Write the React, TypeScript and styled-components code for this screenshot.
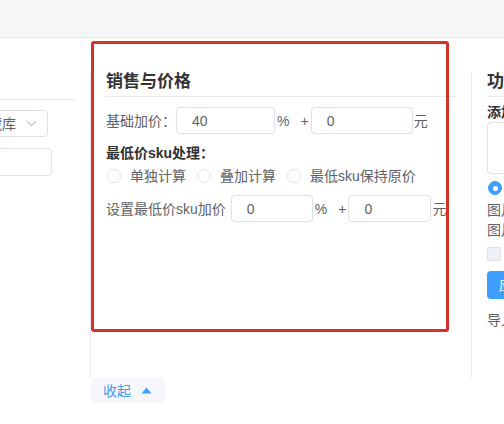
import React from "react";
import styled, { createGlobalStyle } from "styled-components";

const Global = createGlobalStyle`
  html, body { margin: 0; padding: 0; background: #fff; }
  body {
    width: 504px; height: 424px; overflow: hidden;
    font-family: "Liberation Sans", "Noto Sans CJK SC", sans-serif;
    font-size: 14px; color: #606266;
  }
  * { box-sizing: border-box; }
`;

const Page = styled.div`
  position: relative;
  width: 504px;
  height: 424px;
  overflow: hidden;
`;

const TopBar = styled.div`
  height: 38px;
  background: #f5f6f8;
  border-bottom: 1px solid #e6e8eb;
`;

const Main = styled.div`
  display: flex;
  align-items: stretch;
  margin-top: 35px;
  height: 305px;
`;

const LeftCol = styled.div`
  width: 75px;
  flex: none;
  overflow: hidden;
  display: flex;
  flex-direction: column;
  align-items: flex-end;
`;

const LeftHead = styled.div`
  align-self: stretch;
  height: 27px;
  border-bottom: 1px solid #e8eaed;
`;

const SelectBox = styled.div`
  flex: none;
  width: 160px;
  height: 27px;
  margin-top: 10px;
  margin-right: 27px;
  border: 1px solid #dcdfe6;
  border-radius: 4px;
  display: flex;
  align-items: center;
  justify-content: flex-end;
  padding-right: 10px;
  gap: 10px;
  white-space: nowrap;
  color: #606266;
  line-height: 20px;
`;

const LeftInput = styled.div`
  flex: none;
  width: 160px;
  height: 28px;
  margin-top: 11px;
  margin-right: 23px;
  border: 1px solid #dcdfe6;
  border-radius: 4px;
`;

const Column = styled.div<{ $gap?: number }>`
  flex: none;
  margin-left: ${(p) => p.$gap ?? 0}px;
  border-left: 1px solid #e8eaed;
  padding-left: 15px;
  display: flex;
  flex-direction: column;
`;

const MidCol = styled(Column)`
  width: 381px;
  padding-right: 14px;
`;

const RightCol = styled(Column)`
  width: 240px;
  white-space: nowrap;
`;

const SectionTitle = styled.div`
  font-family: "Noto Sans CJK SC", sans-serif;
  font-size: 17px;
  font-weight: 700;
  line-height: 14px;
  color: #333;
  padding-bottom: 9px;
  border-bottom: 1px solid #e8eaed;
  white-space: nowrap;
`;

const Row = styled.div<{ $mt: number }>`
  display: flex;
  align-items: center;
  margin-top: ${(p) => p.$mt}px;
  height: 27px;
  white-space: nowrap;
`;

const Label = styled.span`
  color: #606266;
  line-height: 20px;
`;

const Field = styled.div<{ $w: number; $ml?: number }>`
  width: ${(p) => p.$w}px;
  height: 27px;
  margin-left: ${(p) => p.$ml ?? 0}px;
  border: 1px solid #dcdfe6;
  border-radius: 4px;
  padding-left: 15px;
  display: flex;
  align-items: center;
  color: #606266;
  font-family: "Liberation Sans", sans-serif;
`;

const Unit = styled.span<{ $ml: number; $mr: number }>`
  margin-left: ${(p) => p.$ml}px;
  margin-right: ${(p) => p.$mr}px;
  color: #606266;
  line-height: 20px;
`;

const SubTitle = styled.div<{ $mt: number }>`
  margin-top: ${(p) => p.$mt}px;
  font-weight: 700;
  color: #303133;
  line-height: 20px;
  white-space: nowrap;
`;

const RadioRow = styled.div`
  display: flex;
  align-items: center;
  margin-top: 3px;
  height: 20px;
  white-space: nowrap;
`;

const RadioItem = styled.label`
  display: flex;
  align-items: center;
  margin-right: 10px;
  color: #606266;
  line-height: 20px;
`;

const RadioDot = styled.span<{ $on?: boolean }>`
  width: 14px;
  height: 14px;
  border-radius: 50%;
  border: 1px solid ${(p) => (p.$on ? "#409eff" : "#e0e3e8")};
  background: ${(p) => (p.$on ? "#409eff" : "#fff")};
  margin-left: 1px;
  margin-right: 9px;
  flex: none;
  display: flex;
  align-items: center;
  justify-content: center;
  &::after {
    content: "";
    width: 5px;
    height: 5px;
    border-radius: 50%;
    background: #fff;
    display: ${(p) => (p.$on ? "block" : "none")};
  }
`;

const Line = styled.div<{ $mt?: number }>`
  margin-top: ${(p) => p.$mt ?? 0}px;
  line-height: 20px;
  height: 20px;
  color: #606266;
`;

const BoldLabel = styled(Line)`
  font-weight: 700;
  color: #303133;
`;

const TextArea = styled.div`
  height: 52px;
  width: 200px;
  border: 1px solid #dcdfe6;
  border-radius: 4px;
`;

const CheckBox = styled.span`
  display: block;
  width: 14px;
  height: 14px;
  border: 1px solid #dcdfe6;
  border-radius: 2px;
  background: #edf0f5;
`;

const CheckRow = styled.div`
  margin-top: 4px;
  height: 20px;
  display: flex;
  align-items: center;
  gap: 10px;
`;

const BlueButton = styled.div`
  margin-top: 7px;
  width: 120px;
  height: 28px;
  border-radius: 4px;
  background: #409eff;
  color: #fff;
  line-height: 28px;
  padding-left: 12px;
`;

const Collapse = styled.div`
  margin-left: 91px;
  width: 74px;
  height: 25px;
  background: #f5f7fa;
  border-radius: 4px;
  display: flex;
  align-items: center;
  padding-left: 12px;
  gap: 10px;
  color: #4a98e8;
  line-height: 20px;
`;

const Overlay = styled.div`
  position: absolute;
  left: 91px;
  top: 41px;
  width: 358px;
  height: 291px;
  border: 3px solid #d8302a;
  border-radius: 3px;
  pointer-events: none;
`;

const Chevron = () => (
  <svg width="11" height="7" viewBox="0 0 11 7" fill="none">
    <path d="M1 1l4.5 4.5L10 1" stroke="#c0c4cc" strokeWidth="1.2" />
  </svg>
);

const TriUp = () => (
  <svg width="11" height="7" viewBox="0 0 11 7">
    <path d="M5.5 0.5L10.5 6.5H0.5Z" fill="#409eff" />
  </svg>
);

export default function App() {
  return (
    <Page>
      <Global />
      <TopBar />
      <Main>
        <LeftCol>
          <LeftHead />
          <SelectBox>
            <span>收藏库</span>
            <Chevron />
          </SelectBox>
          <LeftInput />
        </LeftCol>
        <MidCol $gap={15}>
          <SectionTitle>销售与价格</SectionTitle>
          <Row $mt={10}>
            <Label>基础加价：</Label>
            <Field $w={99}>40</Field>
            <Unit $ml={2} $mr={11}>%</Unit>
            <Unit $ml={0} $mr={2}>+</Unit>
            <Field $w={102}>0</Field>
            <Unit $ml={1} $mr={0}>元</Unit>
          </Row>
          <SubTitle $mt={9}>最低价sku处理：</SubTitle>
          <RadioRow>
            <RadioItem><RadioDot />单独计算</RadioItem>
            <RadioItem><RadioDot />叠加计算</RadioItem>
            <RadioItem><RadioDot />最低sku保持原价</RadioItem>
          </RadioRow>
          <Row $mt={9}>
            <Label>设置最低价sku加价</Label>
            <Field $w={82} $ml={5}>0</Field>
            <Unit $ml={2} $mr={11}>%</Unit>
            <Unit $ml={0} $mr={2}>+</Unit>
            <Field $w={83}>0</Field>
            <Unit $ml={1} $mr={0}>元</Unit>
          </Row>
        </MidCol>
        <RightCol $gap={0}>
          <SectionTitle>功能设置</SectionTitle>
          <BoldLabel $mt={5}>添加水印</BoldLabel>
          <TextArea />
          <RadioRow style={{ marginTop: 4 }}>
            <RadioItem>
              <RadioDot $on />
              自动处理
            </RadioItem>
          </RadioRow>
          <Line $mt={2}>图片尺寸</Line>
          <Line>图片质量</Line>
          <CheckRow>
            <CheckBox />
            <span>同步</span>
          </CheckRow>
          <BlueButton>应用</BlueButton>
          <Line $mt={11}>导入设置</Line>
        </RightCol>
      </Main>
      <Collapse>
        <span>收起</span>
        <TriUp />
      </Collapse>
      <Overlay />
    </Page>
  );
}
